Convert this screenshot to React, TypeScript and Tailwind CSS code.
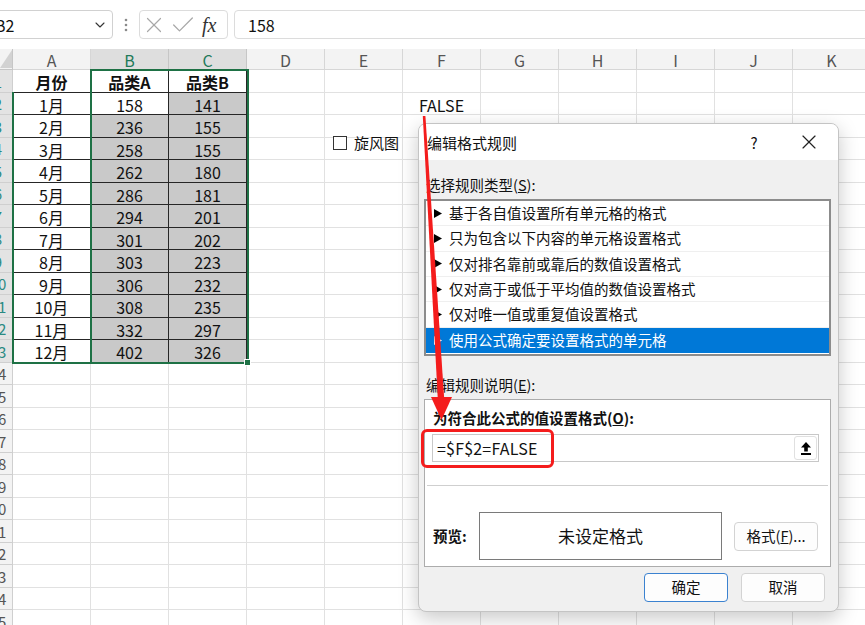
import React from "react";
import { X, Check, ChevronDown } from "lucide-react";

const COLS = ["A", "B", "C", "D", "E", "F", "G", "H", "I", "J", "K"];
const DATA: [string, number, number][] = [
  ["1月", 158, 141],
  ["2月", 236, 155],
  ["3月", 258, 155],
  ["4月", 262, 180],
  ["5月", 286, 181],
  ["6月", 294, 201],
  ["7月", 301, 202],
  ["8月", 303, 223],
  ["9月", 306, 232],
  ["10月", 308, 235],
  ["11月", 332, 297],
  ["12月", 402, 326],
];
const RULES = [
  "基于各自值设置所有单元格的格式",
  "只为包含以下内容的单元格设置格式",
  "仅对排名靠前或靠后的数值设置格式",
  "仅对高于或低于平均值的数值设置格式",
  "仅对唯一值或重复值设置格式",
  "使用公式确定要设置格式的单元格",
];

function TableCell({ n, col }: { n: number; col: number }) {
  const d = n >= 2 ? DATA[n - 2] : null;
  let text: React.ReactNode = "";
  let gray = false;
  if (n === 1) {
    text = ["月份", "品类A", "品类B"][col];
  } else if (d) {
    text = col === 0 ? d[0] : col === 1 ? String(d[1]) : String(d[2]);
    gray = (col === 1 && n >= 3) || col === 2;
  }
  return (
    <div
      className={`w-[78px] shrink-0 flex items-center justify-center pt-[3px] border-r border-b border-[#262626] text-[16px] text-[#111] ${
        gray ? "bg-[#c9c9c9]" : "bg-white"
      } ${n === 1 ? "font-bold" : "font-normal"}`}
    >
      {text}
    </div>
  );
}

function Row({ n }: { n: number }) {
  const sel = n <= 13;
  return (
    <div className="flex h-[22.5px]">
      <div
        className={`w-[13px] shrink-0 overflow-hidden flex border-r border-b border-[#cfcfcf] text-[15px] ${
          sel ? "bg-[#e3e3e3] text-[#2a8a82]" : "bg-[#f3f3f3] text-[#555]"
        }`}
      >
        <div className="w-[30px] -ml-[17px] shrink-0 flex items-center justify-center pt-[2px]">{n}</div>
      </div>
      {COLS.map((c, ci) =>
        n <= 13 && ci <= 2 ? (
          <TableCell key={c} n={n} col={ci} />
        ) : (
          <div
            key={c}
            className="w-[78px] shrink-0 flex items-center justify-center pt-[3px] border-r border-b border-[#e1e1e1] text-[16px] text-[#111] bg-white"
          >
            {n === 2 && c === "F" ? "FALSE" : ""}
          </div>
        )
      )}
    </div>
  );
}

function Tri({ white }: { white?: boolean }) {
  return (
    <svg width="8" height="9" viewBox="0 0 8 9" className="shrink-0">
      <polygon points="0,0 8,4.5 0,9" fill={white ? "#ffffff" : "#000000"} />
    </svg>
  );
}

export default function App() {
  return (
    <div className="relative w-[865px] h-[625px] overflow-hidden bg-white font-['Noto_Sans_CJK_SC','Noto_Sans',sans-serif] text-[#111]">
      {/* formula bar */}
      <div className="flex items-start pt-[10px] h-[49px] bg-white">
        <div className="-ml-[12px] w-[125px] h-[29px] shrink-0 border border-[#d1d1d1] rounded-[4px] flex items-center pl-[6px] pr-[4px] text-[16px]">
          <span>B2</span>
          <ChevronDown size={16} strokeWidth={1.6} className="ml-auto text-[#333]" />
        </div>
        <div className="w-[26px] h-[29px] shrink-0 flex items-center justify-center">
          <svg width="4" height="14" viewBox="0 0 4 14">
            <circle cx="2" cy="2" r="1.3" fill="#8a8a8a" />
            <circle cx="2" cy="7" r="1.3" fill="#8a8a8a" />
            <circle cx="2" cy="12" r="1.3" fill="#8a8a8a" />
          </svg>
        </div>
        <div className="w-[89px] h-[29px] shrink-0 border border-[#dcdcdc] rounded-[4px] flex items-center">
          <X size={26} strokeWidth={1.1} className="ml-[1px] text-[#a8a8a8]" />
          <Check size={28} strokeWidth={1.1} className="ml-[2px] text-[#a8a8a8]" />
          <span className="ml-[5px] font-['Liberation_Serif',serif] italic text-[20px] leading-none text-[#333]">fx</span>
        </div>
        <div className="ml-[6px] w-[700px] h-[29px] shrink-0 border border-[#dcdcdc] rounded-[4px] flex items-center pl-[13px] text-[16px]">
          158
        </div>
      </div>

      {/* column headers */}
      <div className="flex h-[21px]">
        <div className="w-[13px] shrink-0 bg-[#f3f3f3] border-r border-b border-[#c6c6c6] flex items-end">
          <svg width="12" height="18" viewBox="0 0 12 18" className="mb-[1px]">
            <polygon points="12,0 12,18 0,18" fill="#d2d2d2" />
          </svg>
        </div>
        {COLS.map((c) => {
          const sel = c === "B" || c === "C";
          return (
            <div
              key={c}
              className={`w-[78px] shrink-0 flex items-center justify-center pt-[2px] border-r border-b text-[16px] ${
                sel ? "bg-[#dedede] text-[#1f7a5a] border-[#c6c6c6]" : "bg-[#f3f3f3] text-[#555] border-[#d6d6d6]"
              }`}
            >
              {c}
            </div>
          );
        })}
      </div>

      {/* rows */}
      <div className="flex flex-col">
        {Array.from({ length: 25 }, (_, i) => i + 1).map((n) => (
          <Row key={n} n={n} />
        ))}
      </div>

      {/* selection overlays */}
      <div className="absolute left-[90px] top-[69px] w-[159px] h-[295px] border-2 border-[#1e7145] pointer-events-none" />
      <div className="absolute left-[244px] top-[359px] w-[7px] h-[7px] bg-[#1e7145] border border-white pointer-events-none" />
      <div className="absolute left-[12px] top-[92px] w-[80px] h-[272px] border-l-2 border-b-2 border-[#1e7145] pointer-events-none" />

      {/* checkbox form control */}
      <div className="absolute left-[333px] top-[135px] flex items-center gap-[7px]">
        <div className="w-[14px] h-[14px] border-[1.5px] border-[#333] bg-white" />
        <span className="text-[15px] leading-none">旋风图</span>
      </div>

      {/* dialog */}
      <div className="absolute left-[418px] top-[123px] w-[421px] h-[489px] rounded-[8px] border border-[#c4c4c4] bg-[#f0f0f0] overflow-hidden flex flex-col shadow-[0_6px_20px_rgba(0,0,0,0.22)] text-[14.5px]">
        <div className="h-[36px] shrink-0 bg-white flex items-center pl-[8px]">
          <span className="leading-none text-[15px]">编辑格式规则</span>
          <span className="ml-auto w-[14px] text-center text-[15px] leading-none">?</span>
          <X size={24} strokeWidth={1.15} className="ml-[36px] mr-[17px] text-[#222]" />
        </div>
        <div className="flex-1 flex flex-col pl-[5px] pr-[7px]">
          <div className="mt-[16px] h-[18px] flex items-center pl-[2px] leading-none">
            选择规则类型(<span className="underline">S</span>):
          </div>
          <div className="mt-[5px] h-[157px] border-2 border-[#8c8c8c] bg-white flex flex-col">
            {RULES.map((r, i) => {
              const sel = i === 5;
              return (
                <div
                  key={r}
                  className={`h-[25.33px] shrink-0 flex items-center pl-[8px] gap-[7px] ${
                    sel ? "bg-[#0078d7] text-white" : "border-b border-[#efefef] text-[#111]"
                  }`}
                >
                  <Tri white={sel} />
                  <span className="leading-none">{r}</span>
                </div>
              );
            })}
          </div>
          <div className="mt-[20px] h-[18px] flex items-center pl-[2px] leading-none">
            编辑规则说明(<span className="underline">E</span>):
          </div>
          <div className="mt-[5px] h-[168px] border border-[#acacac] bg-white flex flex-col">
            <div className="mt-[9px] h-[18px] flex items-center pl-[8px] font-bold leading-none">
              为符合此公式的值设置格式(<span className="underline">O</span>):
            </div>
            <div className="mt-[7px] ml-[7px] mr-[11px] h-[28px] border border-[#c8c8c8] flex items-center pl-[4px] pr-[1px]">
              <span className="text-[16px] leading-none tracking-[0.2px]">=$F$2=FALSE</span>
              <div className="ml-auto w-[23px] h-[24px] border border-[#e0e0e0] rounded-[3px] bg-white flex items-center justify-center">
                <svg width="10" height="13" viewBox="0 0 10 13">
                  <polygon points="5,0 10,5.5 6.8,5.5 6.8,9.5 3.2,9.5 3.2,5.5 0,5.5" fill="#000" />
                  <rect x="0" y="11" width="10" height="2" fill="#000" />
                </svg>
              </div>
            </div>
            <div className="mt-[23px] mx-[2px] h-px bg-[#cfcfcf]" />
            <div className="mt-[26px] h-[48px] flex items-center pl-[8px]">
              <span className="w-[46px] font-bold leading-none">预览:</span>
              <div className="w-[243px] h-[48px] border border-[#7a7a7a] flex items-center justify-center text-[17px]">
                未设定格式
              </div>
              <div className="ml-[12px] w-[84px] h-[29px] border border-[#d3d3d3] rounded-[4px] bg-[#fdfdfd] flex items-center justify-center leading-none">
                格式(<span className="underline">F</span>)...
              </div>
            </div>
          </div>
          <div className="mt-[6px] h-[29px] flex justify-end pr-[6px] gap-[13px]">
            <div className="w-[84px] h-[29px] border-[1.5px] border-[#3b82d0] rounded-[4px] bg-[#fdfdfd] flex items-center justify-center leading-none">
              确定
            </div>
            <div className="w-[84px] h-[29px] border border-[#d3d3d3] rounded-[4px] bg-[#fdfdfd] flex items-center justify-center leading-none">
              取消
            </div>
          </div>
        </div>
      </div>

      {/* annotations */}
      <svg className="absolute left-0 top-0 pointer-events-none" width="865" height="625" viewBox="0 0 865 625">
        <polygon points="422.8,116 425.4,116 444.2,399 437.8,399" fill="#f41c1c" />
        <polygon points="431,397 452,397 441.5,420" fill="#f41c1c" />
      </svg>
      <div className="absolute left-[421px] top-[429px] w-[133px] h-[39px] border-[3px] border-[#f41c1c] rounded-[6px] pointer-events-none" />
    </div>
  );
}
